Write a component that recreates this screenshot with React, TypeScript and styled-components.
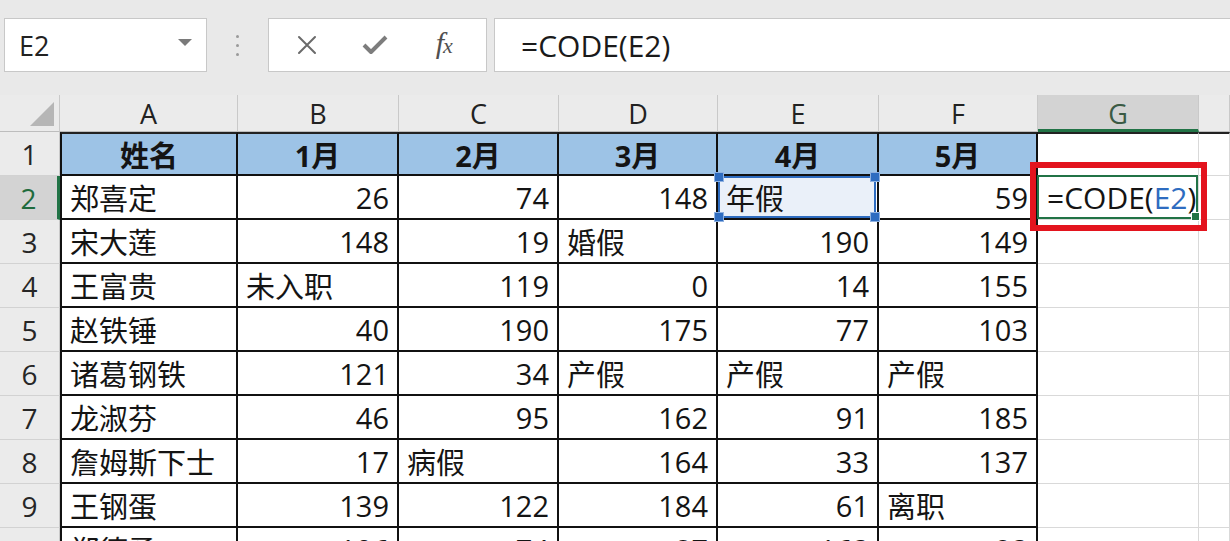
import React from "react";
import styled, { createGlobalStyle, css } from "styled-components";

const Global = createGlobalStyle`
  html, body { margin: 0; padding: 0; background: #ffffff; overflow: hidden; }
  body { font-family: "Open Sans", "Noto Sans CJK SC", sans-serif; }
`;

const Page = styled.div`
  width: 1230px;
  height: 541px;
  overflow: hidden;
  background: #e9e9e9;
`;

const Toolbar = styled.div`
  height: 95px;
  box-sizing: border-box;
  padding: 18px 0 0 4px;
  display: flex;
  align-items: flex-start;
  background: #e9e9e9;
`;

const NameBox = styled.div`
  width: 203px;
  height: 54px;
  box-sizing: border-box;
  background: #fff;
  border: 1px solid #c8c8c8;
  display: flex;
  align-items: center;
  justify-content: space-between;
  padding: 0 14px 0 14px;
  font-size: 27px;
  color: #222;
`;

const Caret = styled.span`
  width: 0;
  height: 0;
  border-left: 7px solid transparent;
  border-right: 7px solid transparent;
  border-top: 7px solid #7a7a7a;
  margin-top: -6px;
`;

const Grip = styled.div`
  width: 61px;
  height: 54px;
  display: flex;
  flex-direction: column;
  align-items: center;
  justify-content: center;
  gap: 6px;
`;

const Dot = styled.span`
  width: 3px;
  height: 3px;
  border-radius: 50%;
  background: #9a9a9a;
`;

const ButtonGroup = styled.div`
  width: 219px;
  height: 54px;
  box-sizing: border-box;
  background: #fff;
  border: 1px solid #c8c8c8;
  display: flex;
  align-items: center;
  justify-content: space-around;
  padding: 0 8px 0 4px;
`;

const IconBtn = styled.span`
  width: 40px;
  height: 40px;
  display: flex;
  align-items: center;
  justify-content: center;
  color: #6f6f6f;
`;

const Fx = styled.span`
  font-family: "Liberation Serif", "DejaVu Serif", serif;
  font-style: italic;
  font-size: 30px;
  color: #505050;
  letter-spacing: -1px;
  margin-top: -4px;
  small {
    font-size: 22px;
  }
`;

const FormulaInput = styled.div`
  flex: 1;
  margin-left: 7px;
  height: 54px;
  box-sizing: border-box;
  background: #fff;
  border: 1px solid #c8c8c8;
  border-right: none;
  display: flex;
  align-items: center;
  padding-left: 26px;
  font-size: 30px;
  color: #1a1a1a;
`;

const Sheet = styled.div`
  display: grid;
  grid-template-columns: 60px 178px 161px 160px 159px 161px 159px 161px 1fr;
  grid-template-rows: 37px repeat(10, 44px);
  background: #fff;
`;

const Corner = styled.div`
  background: #ebebeb;
  border-right: 1px solid #c9c9c9;
  border-bottom: 1px solid #bdbdbd;
  position: relative;
  &::after {
    content: "";
    position: absolute;
    right: 5px;
    bottom: 5px;
    width: 0;
    height: 0;
    border-left: 24px solid transparent;
    border-bottom: 24px solid #b6b6b6;
  }
`;

const ColHead = styled.div<{ $active?: boolean }>`
  box-sizing: border-box;
  background: ${(p) => (p.$active ? "#d3d3d3" : "#ebebeb")};
  border-right: 1px solid #c9c9c9;
  border-bottom: ${(p) => (p.$active ? "3px solid #217346" : "1px solid #bdbdbd")};
  display: flex;
  align-items: center;
  justify-content: center;
  font-size: 27px;
  color: ${(p) => (p.$active ? "#3a5a44" : "#222")};
  padding-top: ${(p) => (p.$active ? "2px" : "0")};
`;

const RowHead = styled.div<{ $active?: boolean }>`
  box-sizing: border-box;
  background: ${(p) => (p.$active ? "#d3d3d3" : "#ebebeb")};
  border-right: ${(p) => (p.$active ? "3px solid #217346" : "1px solid #c9c9c9")};
  border-bottom: 1px solid #d2d2d2;
  display: flex;
  align-items: center;
  justify-content: center;
  font-size: 28px;
  color: ${(p) => (p.$active ? "#1f6b3c" : "#262626")};
`;

const Cell = styled.div<{
  $table?: boolean;
  $header?: boolean;
  $num?: boolean;
  $first?: boolean;
  $top?: boolean;
  $raised?: boolean;
}>`
  position: relative;
  z-index: ${(p) => (p.$raised ? 3 : "auto")};
  box-sizing: border-box;
  display: flex;
  align-items: center;
  justify-content: ${(p) => (p.$header ? "center" : p.$num ? "flex-end" : "flex-start")};
  padding: 0 8px;
  font-size: 29px;
  color: #141414;
  white-space: nowrap;
  font-weight: ${(p) => (p.$header ? 700 : 400)};
  background: ${(p) => (p.$header ? "#9dc3e6" : "#fff")};
  border-right: 1px solid #d9d9d9;
  border-bottom: 1px solid #d9d9d9;
  ${(p) =>
    p.$table &&
    css`
      border-right: 2px solid #111;
      border-bottom: 2px solid #111;
    `}
  ${(p) =>
    p.$first &&
    css`
      border-left: 2px solid #111;
    `}
  ${(p) =>
    p.$top &&
    css`
      border-top: 2px solid #222;
    `}
`;

const RefSelection = styled.div`
  position: absolute;
  inset: 0 1px 0 0;
  border: 2px solid #2e6cc0;
  background: rgba(46, 108, 192, 0.1);
  pointer-events: none;
`;

const Handle = styled.span<{ $x: "left" | "right"; $y: "top" | "bottom" }>`
  position: absolute;
  width: 8px;
  height: 8px;
  background: #2e6cc0;
  border: 1px solid #8fb1e0;
  ${(p) => (p.$x === "left" ? "left: -6px;" : "right: -6px;")}
  ${(p) => (p.$y === "top" ? "top: -6px;" : "bottom: -6px;")}
`;

const RefText = styled.span`
  position: relative;
`;

const ActiveBorder = styled.div`
  position: absolute;
  inset: -1px 0 0 -1px;
  border: 2px solid #217346;
  pointer-events: none;
  &::after {
    content: "";
    position: absolute;
    right: -4px;
    bottom: -4px;
    width: 7px;
    height: 7px;
    background: #217346;
    border: 1px solid #fff;
  }
`;

const FormulaInCell = styled.span`
  font-size: 30px;
  margin-left: 1px;
`;

const Blue = styled.span`
  color: #2e6cc0;
`;

const TextCaret = styled.span`
  display: inline-block;
  width: 2px;
  height: 36px;
  background: #222;
  margin-left: 2px;
`;

const Annotation = styled.div`
  position: absolute;
  z-index: 5;
  left: -8px;
  top: -14px;
  right: -9px;
  bottom: -12px;
  border: 6px solid #e3141e;
  pointer-events: none;
`;

const XIcon = () => (
  <svg width="22" height="22" viewBox="0 0 22 22">
    <path d="M3 3 L19 19 M19 3 L3 19" stroke="#6a6a6a" strokeWidth="2" strokeLinecap="round" />
  </svg>
);

const CheckIcon = () => (
  <svg width="26" height="22" viewBox="0 0 26 22">
    <path d="M2 11 L9 18 L24 3" stroke="#7d7d7d" strokeWidth="4" fill="none" strokeLinejoin="round" />
  </svg>
);

const cols = ["A", "B", "C", "D", "E", "F", "G", "H"];

const data: (string | number)[][] = [
  ["姓名", "1月", "2月", "3月", "4月", "5月"],
  ["郑喜定", 26, 74, 148, "年假", 59],
  ["宋大莲", 148, 19, "婚假", 190, 149],
  ["王富贵", "未入职", 119, 0, 14, 155],
  ["赵铁锤", 40, 190, 175, 77, 103],
  ["诸葛钢铁", 121, 34, "产假", "产假", "产假"],
  ["龙淑芬", 46, 95, 162, 91, 185],
  ["詹姆斯下士", 17, "病假", 164, 33, 137],
  ["王钢蛋", 139, 122, 184, 61, "离职"],
  ["郑德勇", 106, 74, 87, 163, 93],
];

export default function App() {
  return (
    <Page>
      <Global />
      <Toolbar>
        <NameBox>
          <span>E2</span>
          <Caret />
        </NameBox>
        <Grip>
          <Dot />
          <Dot />
          <Dot />
        </Grip>
        <ButtonGroup>
          <IconBtn>
            <XIcon />
          </IconBtn>
          <IconBtn>
            <CheckIcon />
          </IconBtn>
          <IconBtn>
            <Fx>
              f<small>x</small>
            </Fx>
          </IconBtn>
        </ButtonGroup>
        <FormulaInput>=CODE(E2)</FormulaInput>
      </Toolbar>
      <Sheet>
        <Corner />
        {cols.map((c) => (
          <ColHead key={c} $active={c === "G"}>
            {c === "H" ? "" : c}
          </ColHead>
        ))}
        {data.map((row, ri) => (
          <React.Fragment key={ri}>
            <RowHead $active={ri === 1}>{ri + 1}</RowHead>
            {row.map((v, ci) => {
              const isHeader = ri === 0;
              const isNum = typeof v === "number";
              const isRef = ri === 1 && ci === 4;
              return (
                <Cell
                  key={ci}
                  $table
                  $header={isHeader}
                  $num={isNum}
                  $first={ci === 0}
                  $top={isHeader}
                  $raised={isRef}
                >
                  {isRef && (
                    <RefSelection>
                      <Handle $x="left" $y="top" />
                      <Handle $x="right" $y="top" />
                      <Handle $x="left" $y="bottom" />
                      <Handle $x="right" $y="bottom" />
                    </RefSelection>
                  )}
                  <RefText>{v}</RefText>
                </Cell>
              );
            })}
            <Cell $top={ri === 0} $raised={ri === 1}>
              {ri === 1 && (
                <>
                  <ActiveBorder />
                  <FormulaInCell>
                    =CODE(<Blue>E2</Blue>)
                  </FormulaInCell>
                  <TextCaret />
                  <Annotation />
                </>
              )}
            </Cell>
            <Cell $top={ri === 0} />
          </React.Fragment>
        ))}
      </Sheet>
    </Page>
  );
}
